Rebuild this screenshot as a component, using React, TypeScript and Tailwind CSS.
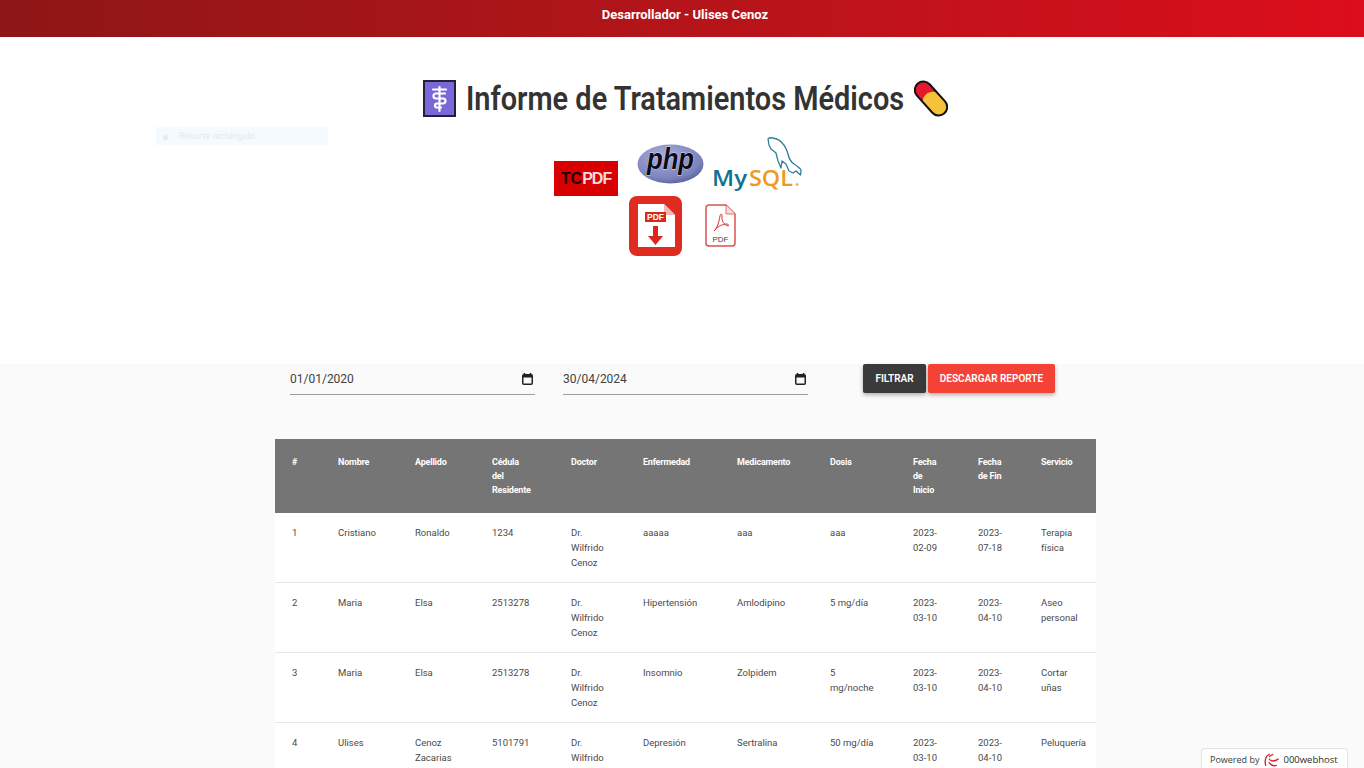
const columns = [
  { label: "#", width: "w-[46px]" },
  { label: "Nombre", width: "w-[77px]" },
  { label: "Apellido", width: "w-[77px]" },
  { label: "Cédula\ndel\nResidente", width: "w-[79px]" },
  { label: "Doctor", width: "w-[72px]" },
  { label: "Enfermedad", width: "w-[94px]" },
  { label: "Medicamento", width: "w-[93px]" },
  { label: "Dosis", width: "w-[83px]" },
  { label: "Fecha\nde\nInicio", width: "w-[65px]" },
  { label: "Fecha\nde Fin", width: "w-[63px]" },
  { label: "Servicio", width: "w-[72px]" },
];

const rows = [
  ["1", "Cristiano", "Ronaldo", "1234", "Dr. Wilfrido Cenoz", "aaaaa", "aaa", "aaa", "2023-02-09", "2023-07-18", "Terapia física"],
  ["2", "Maria", "Elsa", "2513278", "Dr. Wilfrido Cenoz", "Hipertensión", "Amlodipino", "5 mg/día", "2023-03-10", "2023-04-10", "Aseo personal"],
  ["3", "Maria", "Elsa", "2513278", "Dr. Wilfrido Cenoz", "Insomnio", "Zolpidem", "5 mg/noche", "2023-03-10", "2023-04-10", "Cortar uñas"],
  ["4", "Ulises", "Cenoz Zacarias", "5101791", "Dr. Wilfrido Cenoz", "Depresión", "Sertralina", "50 mg/día", "2023-03-10", "2023-04-10", "Peluquería"],
];

const MedicalIcon = () => (
  <svg width="33" height="37" viewBox="0 0 33 37">
    <rect x="1" y="1" width="31" height="35" fill="#7b68d8" stroke="#23203a" strokeWidth="2" />
    <g fill="none" stroke="#fff" strokeWidth="2.200" strokeLinecap="round">
      <path d="M16.500 7v24" />
      <path d="M10 9.500h13" />
      <path d="M22 13.500h-9a2.500 2.500 0 0 0 0 5h7a2.500 2.500 0 0 1 0 5h-6a2 2 0 0 0 0 4h4" />
    </g>
  </svg>
);

const PillIcon = () => (
  <svg width="34" height="37" viewBox="0 0 34 37">
    <g transform="rotate(48 17 18.500)">
      <rect x="-3" y="10" width="40" height="17" rx="8.500" fill="#f5c33b" />
      <path d="M17 10H5.500a8.500 8.500 0 0 0 0 17H14a10 10 0 0 1 3-17z" fill="#e8182c" />
      <rect x="-3" y="10" width="40" height="17" rx="8.500" fill="none" stroke="#111" strokeWidth="2" />
    </g>
  </svg>
);

const TcpdfLogo = () => (
  <div className="flex h-[35px] w-[64px] items-center justify-center bg-[#d80000] font-['Liberation_Sans',sans-serif] text-[16px] font-bold">
    <span className="text-[#1a0505]">TC</span>
    <span className="tracking-[-1px] text-[#f0dcdc]">PDF</span>
  </div>
);

const PhpLogo = () => (
  <svg width="67" height="40" viewBox="0 0 67 40">
    <defs>
      <radialGradient id="phpFill" cx="0.400" cy="0.300" r="0.800">
        <stop offset="0" stopColor="#a9addb" />
        <stop offset="0.700" stopColor="#7d84bd" />
        <stop offset="1" stopColor="#4d5596" />
      </radialGradient>
    </defs>
    <ellipse cx="33.500" cy="20" rx="33" ry="19.500" fill="url(#phpFill)" />
    <text
      x="10"
      y="25"
      fontFamily="Liberation Sans, sans-serif"
      fontSize="29"
      fontWeight="700"
      fontStyle="italic"
      fill="#0c0c14"
      stroke="#d8daf0"
      strokeWidth="0.800"
      paintOrder="stroke"
      textLength="47"
      lengthAdjust="spacingAndGlyphs"
    >
      php
    </text>
  </svg>
);

const MysqlLogo = () => (
  <svg width="92" height="58" viewBox="0 0 92 58">
    <path
      d="M57 2c1-1 3-1.500 5-1 4 .500 7 2 10 6 3 3 4 7 5 10 1 5 3 8 6 10 3 2 6 4 7 6l-.500 5-4.500-4-3 2-4-2-3-7-4-3-1 7-3-7-2-8-5-4-2-4z"
      fill="#fff"
      stroke="#2f7f9b"
      strokeWidth="1.300"
      strokeLinejoin="round"
    />
    <g fontFamily="Open Sans, sans-serif" fontSize="22" fontWeight="600">
      <text x="1" y="49" fill="#0f7391" textLength="35" lengthAdjust="spacingAndGlyphs">
        My
      </text>
      <text x="38" y="49" fill="#ee9a1f" textLength="44" lengthAdjust="spacingAndGlyphs">
        SQL
      </text>
    </g>
    <circle cx="86" cy="47.500" r="1.500" fill="#d9b98a" />
  </svg>
);

const PdfDownloadIcon = () => (
  <svg width="53" height="60" viewBox="0 0 53 60">
    <rect width="53" height="60" rx="8" fill="#e02b20" />
    <path d="M9 8h26l11 11v32H9z" fill="#fff" />
    <path d="M35 8l11 11H35z" fill="#f3b7b2" />
    <rect x="16" y="16" width="21" height="10" fill="#d8281e" />
    <text x="26.500" y="24.300" textAnchor="middle" fontFamily="Liberation Sans, sans-serif" fontSize="8.500" fontWeight="700" fill="#fff">
      PDF
    </text>
    <path d="M24 30h5v10h5l-7.500 9-7.500-9h5z" fill="#d8281e" />
  </svg>
);

const PdfFileIcon = () => (
  <svg width="31" height="43" viewBox="0 0 31 43">
    <path d="M4 1h17l9 9v29a3 3 0 0 1-3 3H4a3 3 0 0 1-3-3V4a3 3 0 0 1 3-3z" fill="#fff" stroke="#d9534f" strokeWidth="1.500" />
    <path d="M21 1v9h9" fill="#f7dcdb" stroke="#d9534f" strokeWidth="0.800" />
    <path d="M9 27c3-2 5-9 6-15 .500-3 2.500-2 2 1-.500 4 2 8 6 9 1 .300 .800-2-1-2-5 0-10 3-13 7" fill="none" stroke="#d9322c" strokeWidth="1" />
    <text x="15.500" y="37.500" textAnchor="middle" fontFamily="Liberation Sans, sans-serif" fontSize="8" fill="#444">
      PDF
    </text>
  </svg>
);

const CalendarIcon = () => (
  <svg width="11" height="12" viewBox="0 0 11 12" className="mr-[2px]">
    <path d="M2.500 0v2M8.500 0v2" stroke="#222" strokeWidth="1.500" />
    <rect x="0.750" y="1.750" width="9.500" height="9.500" rx="1" fill="none" stroke="#222" strokeWidth="1.500" />
    <rect x="1" y="2" width="9" height="2.500" fill="#222" />
  </svg>
);

const DateField = ({ value }: { value: string }) => (
  <div className="flex h-[31px] w-[245px] items-center justify-between border-b border-[#9e9e9e] pb-[1px]">
    <span className="text-[12px] text-[#424242]">{value}</span>
    <CalendarIcon />
  </div>
);

const WebhostMark = () => (
  <svg width="16" height="16" viewBox="0 0 18 16" className="shrink-0">
    <g fill="none" stroke="#c9282d" strokeWidth="1.500" strokeLinecap="round">
      <path d="M7 1.500C3 4 1.500 8 3 14" />
      <path d="M11 2c-2 .500-3 1-4 3" strokeDasharray="1.500 1.500" />
      <path d="M7 7c3 3 6 3 10 0" />
      <path d="M7 11c2 3 5 4 8 3" />
    </g>
  </svg>
);

export default function App() {
  return (
    <div className="relative flex h-screen flex-col overflow-hidden bg-white font-['Roboto',sans-serif]">
      <header className="flex h-[37px] shrink-0 items-center justify-center bg-gradient-to-r from-[#8e1616] to-[#dc0d1c] pb-[8px] pl-[6px] text-[13px] font-bold text-white">
        Desarrollador - Ulises Cenoz
      </header>

      <section className="h-[327px] shrink-0 pt-[43px]">
        <div className="flex items-center justify-center gap-[10px] pl-[7px]">
          <MedicalIcon />
          <h1 className="w-[438px] text-[33px] leading-[37px] font-semibold whitespace-nowrap text-[#333333]">
            <span className="inline-block origin-left scale-x-[0.876]">Informe de Tratamientos Médicos</span>
          </h1>
          <PillIcon />
        </div>
        <div className="mt-[20px] flex h-[59px] items-start justify-center pr-[7px]">
          <div className="mt-[24px]">
            <TcpdfLogo />
          </div>
          <div className="mt-[7px] ml-[19px]">
            <PhpLogo />
          </div>
          <div className="ml-[7px]">
            <MysqlLogo />
          </div>
        </div>
        <div className="flex items-start justify-center gap-[23px]">
          <PdfDownloadIcon />
          <div className="mt-[8px]">
            <PdfFileIcon />
          </div>
        </div>
      </section>

      <main className="flex-1 bg-[#fafafa]">
        <div className="ml-[290px] flex items-start">
          <DateField value="01/01/2020" />
          <div className="ml-[28px]">
            <DateField value="30/04/2024" />
          </div>
          <button className="ml-[55px] h-[29px] w-[63px] rounded-[2px] bg-[#3a3a3a] text-[10px] font-semibold text-white uppercase shadow-[0_2px_4px_rgba(0,0,0,0.3)]">
            Filtrar
          </button>
          <button className="ml-[2px] h-[29px] w-[127px] rounded-[2px] bg-[#f44336] text-[10px] font-semibold text-white uppercase shadow-[0_2px_4px_rgba(0,0,0,0.3)]">
            Descargar reporte
          </button>
        </div>

        <table className="mt-[44px] ml-[275px] w-[821px] table-fixed border-collapse text-left">
          <colgroup>
            {columns.map((col) => (
              <col key={col.label} className={col.width} />
            ))}
          </colgroup>
          <thead className="bg-[#757575] text-white">
            <tr>
              {columns.map((col) => (
                <th
                  key={col.label}
                  className="py-[16px] pr-[4px] pl-[17px] align-top text-[9px] leading-[14px] font-bold tracking-[-0.2px] whitespace-pre-line"
                >
                  {col.label}
                </th>
              ))}
            </tr>
          </thead>
          <tbody className="bg-white text-[9.500px] text-[#4a4a4a]">
            {rows.map((row) => (
              <tr key={row[0]} className="border-b border-[#e6e6e6]">
                {row.map((cell, i) => (
                  <td key={i} className="py-[12px] pr-[17px] pl-[17px] align-top leading-[15px]">
                    {cell}
                  </td>
                ))}
              </tr>
            ))}
          </tbody>
        </table>
      </main>

      {/* faded toolbar ghost left in the capture */}
      <div className="absolute top-[127px] left-[156px] flex h-[18px] w-[172px] items-center gap-[11px] bg-[#f5faff] pt-[2px] pl-[7px] text-[9px] text-[#e3e9f0]">
        <span className="h-[5px] w-[5px] rounded-full bg-[#e3e9f4]" />
        <span>Recorte rectángulo</span>
      </div>

      <div className="absolute right-[16px] bottom-0 flex h-[20px] w-[147px] items-center gap-[4px] rounded-t-[4px] border border-b-0 border-[#e3e3e3] bg-white pt-[3px] pl-[8px] font-['Open_Sans',sans-serif] whitespace-nowrap text-[#3a3a3a]">
        <span className="text-[9px]">Powered by</span>
        <WebhostMark />
        <span className="text-[9.500px] text-[#2a2a2a]">000webhost</span>
      </div>
    </div>
  );
}
